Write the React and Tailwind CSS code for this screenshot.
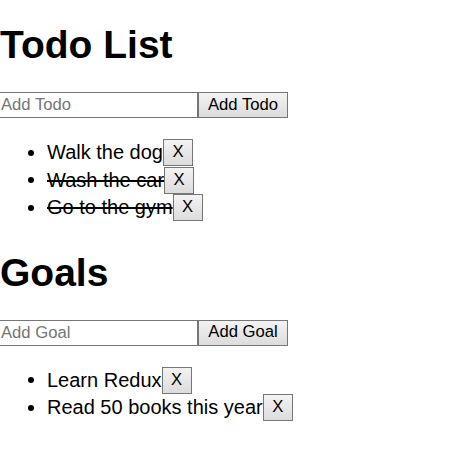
import { useState } from "react";

const FONT = { fontFamily: '"Liberation Sans", Arial, sans-serif' };

// Default-looking browser button (scaled 125%)
function Btn({ children, onClick, className = "" }) {
  return (
    <button
      onClick={onClick}
      className={`shrink-0 border border-[#767676] bg-gradient-to-b from-[#f3f3f3] to-[#dcdcdc] px-[8px] text-[16.67px] leading-none text-black ${className}`}
    >
      {children}
    </button>
  );
}

function List({ title, placeholder, buttonLabel, items, setItems }) {
  const [text, setText] = useState("");

  function add() {
    if (!text.trim()) return;
    setItems([...items, { name: text, done: false }]);
    setText("");
  }

  return (
    <div>
      <h1 className="mt-[21px] h-[46px] text-[39px] font-bold leading-[47px] text-black">
        {title}
      </h1>
      <div className="mt-[25px] flex h-[26px]">
        <input
          value={text}
          onChange={(e) => setText(e.target.value)}
          placeholder={placeholder}
          className="-ml-[2px] h-[26px] w-[200px] border border-[#767676] bg-white px-[2px] text-[16.67px] text-black placeholder:text-[#757575] outline-none"
        />
        <Btn onClick={add} className="h-[26px] w-[90px]">
          {buttonLabel}
        </Btn>
      </div>
      {/* bottom margin collapses with the next heading's top margin */}
      <ul className="mt-[21px] mb-[27px] pl-[28px]">
        {items.map((item, i) => (
          <li key={i} className="flex h-[27.5px] items-center">
            <span className="mr-[13px] h-[6px] w-[6px] rounded-full bg-black" />
            <span
              className={`text-[20px] leading-[23px] text-black ${
                item.done ? "line-through" : ""
              }`}
            >
              {item.name}
            </span>
            <Btn
              onClick={() => setItems(items.filter((_, j) => j !== i))}
              className="h-[27px] w-[30px] px-0"
            >
              X
            </Btn>
          </li>
        ))}
      </ul>
    </div>
  );
}

export default function App() {
  const [todos, setTodos] = useState([
    { name: "Walk the dog", done: false },
    { name: "Wash the car", done: true },
    { name: "Go to the gym", done: true },
  ]);
  const [goals, setGoals] = useState([
    { name: "Learn Redux", done: false },
    { name: "Read 50 books this year", done: false },
  ]);

  return (
    <div className="min-h-[472px] bg-white" style={FONT}>
      <List
        title="Todo List"
        placeholder="Add Todo"
        buttonLabel="Add Todo"
        items={todos}
        setItems={setTodos}
      />
      <List
        title="Goals"
        placeholder="Add Goal"
        buttonLabel="Add Goal"
        items={goals}
        setItems={setGoals}
      />
    </div>
  );
}
